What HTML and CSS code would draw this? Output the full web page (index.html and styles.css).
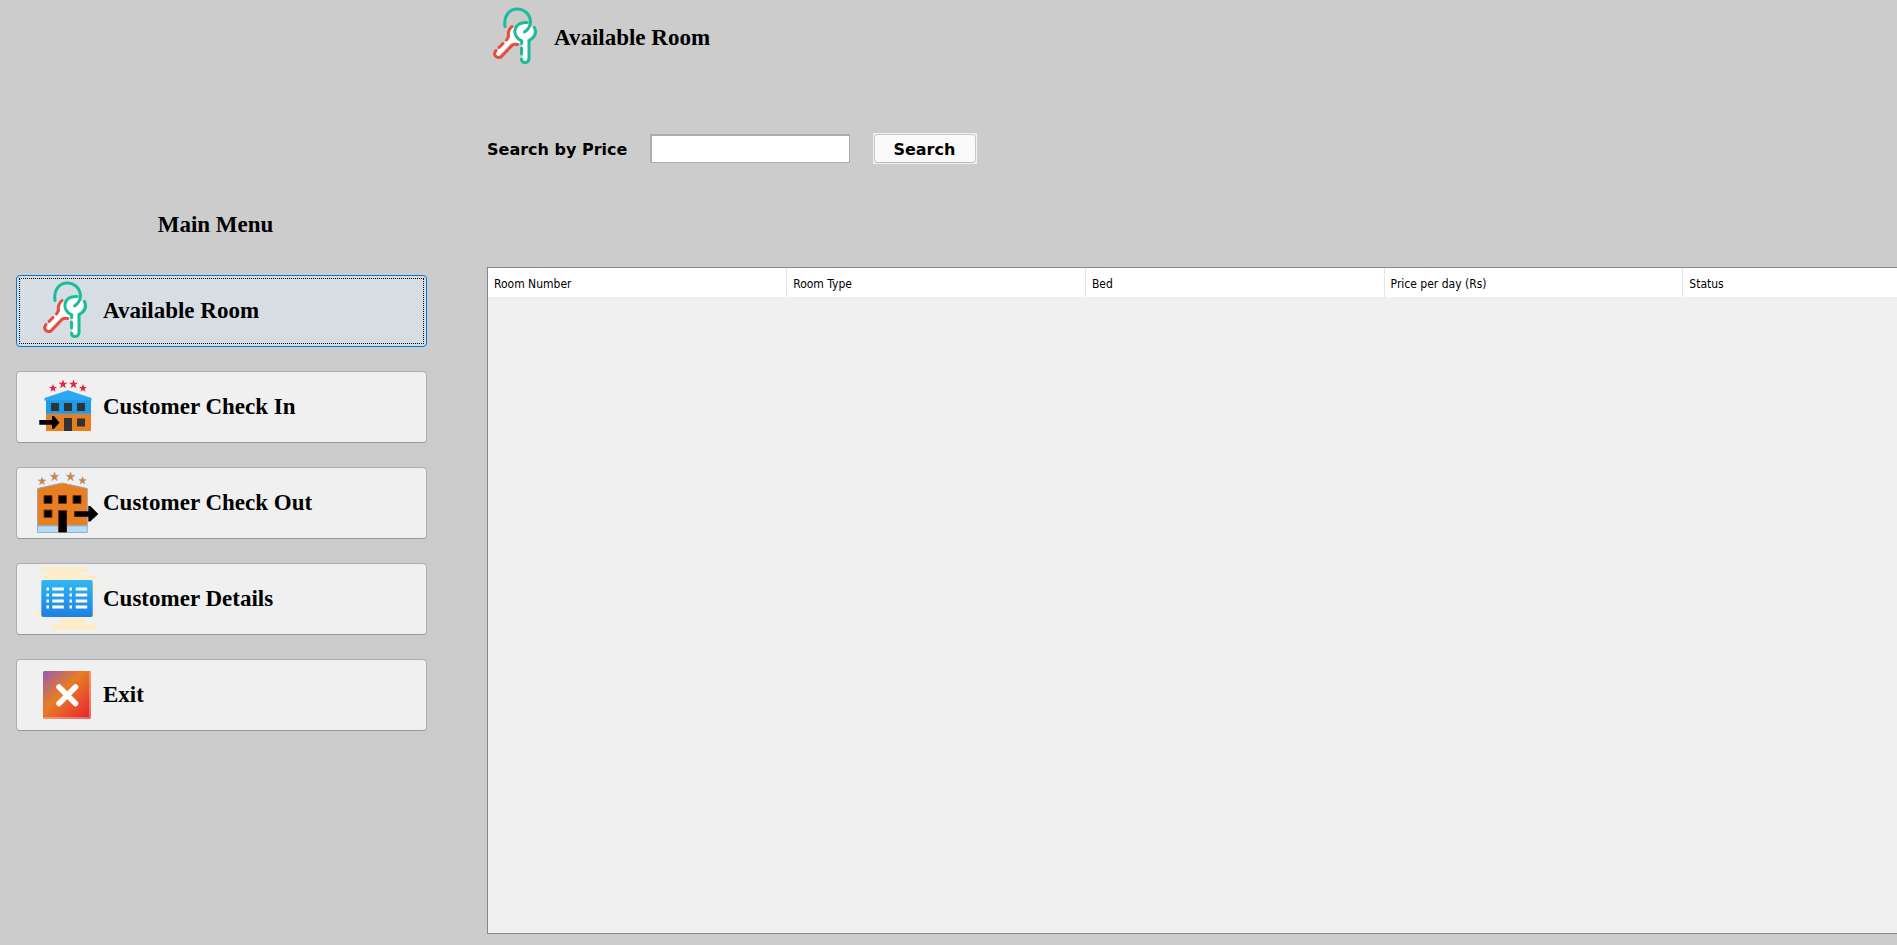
FILE: index.html
```html
<!DOCTYPE html>
<html lang="en">
<head>
<meta charset="utf-8">
<title>Available Room</title>
<link rel="stylesheet" href="styles.css">
</head>
<body>
<svg class="defs" aria-hidden="true">
  <defs>
    <symbol id="keys" viewBox="0 0 64 64">
      <path d="M27 23L42 18l8 7-1 7-6 4v20q-3 4-6 0V37l-5 2-6-1-13 14-4-3 14-16-1-5z" fill="#fff"/>
      <g fill="none" stroke-width="3" stroke-linecap="round">
        <path d="M27 21.500q-4.500 4-3.500 10l-2 3.500M18 38.500l-4 4M11 45.500q-2.500 3-.5 5.500t5.500 1L27 40.500q2-2 5.500-1" stroke="#e74c3c"/>
        <path d="M20 21.500C17 -1 44 -1 45.500 16.500q0 6.500-6 10.500M42 17.500c-14-1-16 14-5.300 18.500v2.500M36.500 43v6M36.500 54q0 3.500 3.500 3.500t4-3.500V35.500q9-4.500 5.500-13" stroke="#1abc9c"/>
      </g>
    </symbol>
    <symbol id="star" viewBox="0 0 10 10">
      <path d="M5 0l1.300 3.500 3.700.1-3 2.300 1.100 3.700L5 7.500 1.900 9.600 3 5.900 0 3.600l3.700-.1z"/>
    </symbol>
    <linearGradient id="card" x1="0" y1="0" x2="0" y2="1">
      <stop offset="0" stop-color="#2fb8f2"/><stop offset="1" stop-color="#1e7fe4"/>
    </linearGradient>
    <linearGradient id="exit" x1="0" y1="0" x2="1" y2="1">
      <stop offset="0" stop-color="#9b59b6"/><stop offset=".42" stop-color="#e67e22"/><stop offset=".58" stop-color="#e8652a"/><stop offset=".95" stop-color="#e9252d"/>
    </linearGradient>
  </defs>
</svg>
<div class="app">
  <aside class="sidebar">
    <h2 class="menu-title">Main Menu</h2>
    <nav class="menu">
      <button class="menu-item is-active" type="button">
        <svg class="icon" aria-hidden="true"><use href="#keys"/></svg>
        Available Room
      </button>
      <button class="menu-item" type="button">
        <svg class="icon" viewBox="0 0 64 64" aria-hidden="true">
          <g fill="#e9213c">
            <use href="#star" x="14" y="9" width="8" height="8"/>
            <use href="#star" x="23.500" y="4.500" width="9" height="9"/>
            <use href="#star" x="34" y="4.500" width="9" height="9"/>
            <use href="#star" x="44" y="9" width="8" height="8"/>
          </g>
          <path d="M11 25h45v14H11z" fill="#1c9be6"/>
          <path d="M9.500 23L33 15.300 56.500 23v2.500h-47z" fill="#2aa8f2"/>
          <path d="M11 39h45v17H11z" fill="#e67e22"/>
          <path d="M11 38.500h45v1.500H11z" fill="#b98a5c"/>
          <path d="M16 28h8v8h-8zM29 28h8v8h-8zM42 28h8v8h-8zM29 43h8v13h-8zM42 43.500h8v8h-8z" fill="#333"/>
          <path d="M4.300 45H17v-4h2l5.500 6.700-5.500 6h-2v-4H4.300z"/>
        </svg>
        Customer Check In
      </button>
      <button class="menu-item" type="button">
        <svg class="icon" viewBox="0 0 64 64" aria-hidden="true">
          <g fill="#e67e22" stroke="#9aaecb" stroke-width=".7">
            <use href="#star" x="3" y="6" width="8" height="8"/>
            <use href="#star" x="15" y="1" width="9" height="9"/>
            <use href="#star" x="31" y="1" width="9" height="9"/>
            <use href="#star" x="43.500" y="5.500" width="8" height="8"/>
          </g>
          <path d="M2.500 17.500L27.300 12l25 5.500v37H2.500z" fill="#e67e22" stroke="#a9a3a5"/>
          <path d="M2.500 55h49.800v6.500H2.500z" fill="#b5dcf5" stroke="#8fb4d6"/>
          <path d="M9 24.500h8v8H9zM23.500 24.500h8v8h-8zM38 24.500h8v8h-8zM9 39h8v7.500H9zM23.500 39.500h8V61h-8z" stroke="#7d2a14"/>
          <path d="M24 40h7.500v21H24zM39.300 40.300h14v-5.300h2l8 8-8 7.500h-2v-4.800h-14z"/>
        </svg>
        Customer Check Out
      </button>
      <button class="menu-item" type="button">
        <svg class="icon" viewBox="0 0 64 64" aria-hidden="true">
          <g fill="#fdecca">
            <rect x="6" y="0" width="47" height="5" rx="2.500"/>
            <rect x="13" y="3" width="31" height="7"/>
            <rect x="8" y="8" width="53" height="5" rx="2.500"/>
            <rect x="52" y="17" width="11" height="6" rx="3"/>
            <rect x="2" y="44" width="12" height="6" rx="3"/>
            <rect x="50" y="44" width="12" height="6" rx="3"/>
            <rect x="26" y="48" width="25" height="10"/>
            <rect x="16.500" y="57" width="45" height="6" rx="3"/>
          </g>
          <rect x="6.300" y="13" width="51.400" height="37" rx="2" fill="url(#card)"/>
          <path d="M11.500 22h2.500M11.500 28h2.500M11.500 34h2.500M11.500 40h2.500M34.500 22H37M34.500 28H37M34.500 34H37M34.500 40H37M17.300 22h11.500M17.300 28h11.500M17.300 34h11.500M17.300 40h11.500M40.700 22h11.500M40.700 28h11.500M40.700 34h11.500M40.700 40h11.500" stroke="#fff" stroke-width="2.800"/>
        </svg>
        Customer Details
      </button>
      <button class="menu-item" type="button">
        <svg class="icon" viewBox="0 0 64 64" aria-hidden="true">
          <rect x="8" y="8" width="48" height="48" rx="1.500" fill="url(#exit)"/>
          <path d="M8.500 55h46.500V9" fill="none" stroke="#fff" stroke-opacity=".3" stroke-width="2"/>
          <path d="M24 24l16.500 16.500M40.500 24L24 40.500" stroke="#fff" stroke-width="5.500" stroke-linecap="round"/>
        </svg>
        Exit
      </button>
    </nav>
  </aside>
  <main class="content">
    <header class="page-head">
      <svg class="icon" aria-hidden="true"><use href="#keys"/></svg>
      <h1 class="page-title">Available Room</h1>
    </header>
    <form class="search">
      <label for="price">Search by Price</label>
      <input class="search-field" id="price" type="text">
      <span class="search-frame"><button class="search-button" type="button">Search</button></span>
    </form>
    <div class="grid-panel">
      <table class="rooms">
        <thead>
          <tr><th>Room Number</th><th>Room Type</th><th>Bed</th><th>Price per day (Rs)</th><th class="last">Status</th></tr>
        </thead>
      </table>
    </div>
  </main>
</div>
</body>
</html>
```
FILE: styles.css
```css
* { box-sizing: border-box; }

body {
  margin: 0;
  background: #ccc;
  color: #000;
}

.defs {
  position: absolute;
  width: 0;
  height: 0;
}

.app {
  display: grid;
  grid-template-columns: 487px 1fr;
  min-height: 100vh;
}

.sidebar { padding: 211px 60px 0 16px; }

.menu-title,
.page-title,
.menu-item {
  margin: 0;
  font: bold 23px/28px "Liberation Serif", "Times New Roman", serif;
}

.menu-title {
  padding-right: 12px;
  text-align: center;
}

.page-title { padding-top: 2px; }

.menu {
  display: flex;
  flex-direction: column;
  gap: 24px;
  margin-top: 36px;
}

.menu-item {
  display: flex;
  align-items: center;
  gap: 4px;
  height: 72px;
  padding: 0 18px;
  border: 1px solid #adadad;
  border-bottom-color: #999;
  border-radius: 4px;
  background: #f0f0f0;
  color: #000;
  text-align: left;
}

.menu-item.is-active {
  border-color: #0078d7;
  background: #d6dde3;
  outline: 1px dotted #000;
  outline-offset: -4px;
}

.icon {
  flex: none;
  width: 64px;
  height: 64px;
}

.content {
  display: flex;
  flex-direction: column;
  min-width: 0;
  padding: 5px 0 11px;
}

.page-head {
  display: flex;
  align-items: center;
  gap: 5px;
  margin-left: -2px;
}

.search {
  display: flex;
  align-items: center;
  margin: 64px 0 103px;
  font: bold 16px/20px "DejaVu Sans", Verdana, sans-serif;
}

.search label { padding-top: 2px; }

.search-field {
  width: 200px;
  height: 29px;
  margin: 0 23px;
  padding: 2px 6px;
  border: 1px solid #abadb3;
  border-top-width: 2px;
  border-left-width: 2px;
  background: #fff;
  font: inherit;
}

.search-frame {
  display: flex;
  padding: 1px;
  background: #f0f0f0;
}

.search-button {
  width: 102px;
  height: 29px;
  padding: 2px 2px 0 0;
  border: 1px solid #c8c8c8;
  border-bottom-color: #b8b8b8;
  border-radius: 4px;
  background: #fafafa;
  color: #000;
  font: inherit;
}

.grid-panel {
  flex: 1;
  border: 1px solid #828790;
  border-right: 0;
  background: #f0f0f0;
}

.rooms {
  width: 100%;
  border-collapse: collapse;
  table-layout: fixed;
}

.rooms th {
  width: 21.2%;
  height: 29px;
  padding: 2px 6px 0;
  border-right: 1px solid #e5e5e5;
  background: #fff;
  font: 12px/16px "DejaVu Sans Condensed", "DejaVu Sans", Tahoma, sans-serif;
  text-align: left;
}

.rooms .last {
  width: auto;
  border-right: 0;
}
```
